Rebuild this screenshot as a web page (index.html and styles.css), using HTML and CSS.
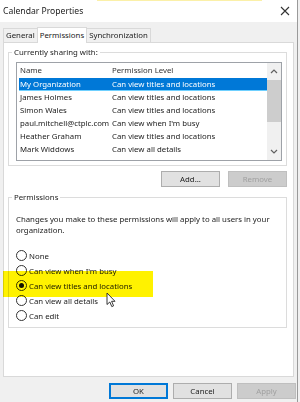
FILE: index.html
```html
<!DOCTYPE html>
<html lang="en">
<head>
  <meta charset="UTF-8">
  <title>Calendar Properties</title>
  <link rel="stylesheet" href="styles.css">
</head>
<body>
  <div class="window">
    <div class="titlebar">
      <span class="title">Calendar Properties</span>
      <svg class="close" width="10" height="10" viewBox="0 0 10 10"><path d="M1 1L9 9M9 1L1 9" stroke="#333" stroke-width="1.1"/></svg>
    </div>

    <div class="content">
      <div class="tabs">
        <div class="tab">General</div>
        <div class="tab active">Permissions</div>
        <div class="tab">Synchronization</div>
      </div>

      <div class="page">
        <fieldset class="group share">
          <legend>Currently sharing with:</legend>
          <div class="list">
            <div class="rows">
              <div class="row head"><span class="c1">Name</span><span class="c2">Permission Level</span></div>
              <div class="row selected"><span class="c1">My Organization</span><span class="c2">Can view titles and locations</span></div>
              <div class="row"><span class="c1">James Holmes</span><span class="c2">Can view titles and locations</span></div>
              <div class="row"><span class="c1">Simon Wales</span><span class="c2">Can view titles and locations</span></div>
              <div class="row"><span class="c1">paul.mitchell@ctplc.com</span><span class="c2">Can view when I'm busy</span></div>
              <div class="row"><span class="c1">Heather Graham</span><span class="c2">Can view titles and locations</span></div>
              <div class="row"><span class="c1">Mark Widdows</span><span class="c2">Can view all details</span></div>
              <div class="row"><span class="c1">Richard Bowles</span><span class="c2">Can view titles and locations</span></div>
            </div>
            <div class="scrollbar">
              <svg class="arrow" width="8" height="5" viewBox="0 0 8 5"><path d="M1 4L4 1L7 4" fill="none" stroke="#606060" stroke-width="1.2"/></svg>
              <div class="thumb"></div>
              <div class="track"></div>
              <svg class="arrow" width="8" height="5" viewBox="0 0 8 5"><path d="M1 1L4 4L7 1" fill="none" stroke="#606060" stroke-width="1.2"/></svg>
            </div>
          </div>
        </fieldset>

        <div class="list-buttons">
          <button class="btn">Add...</button>
          <button class="btn" disabled>Remove</button>
        </div>

        <fieldset class="group perms">
          <legend>Permissions</legend>
          <p class="note">Changes you make to these permissions will apply to all users in your organization.</p>
          <div class="radios">
            <div class="radio"><span class="dot"></span>None</div>
            <div class="radio"><span class="dot"></span>Can view when I'm busy</div>
            <div class="radio"><span class="dot checked"></span>Can view titles and locations</div>
            <div class="radio"><span class="dot"></span>Can view all details</div>
            <div class="radio"><span class="dot"></span>Can edit</div>
          </div>
        </fieldset>
      </div>

      <div class="dialog-buttons">
        <button class="btn default">OK</button>
        <button class="btn">Cancel</button>
        <button class="btn" disabled>Apply</button>
      </div>
    </div>
  </div>

  <!-- highlighter mark and mouse pointer from the recording -->
  <div class="highlight"></div>
  <svg class="cursor" width="10" height="16" viewBox="0 0 10 16"><path d="M1 1L1 12.5L3.8 10L5.8 14.6L7.6 13.8L5.6 9.3L9 9.3Z" fill="#fff" stroke="#222" stroke-width="0.9" stroke-linejoin="round"/></svg>
</body>
</html>
```

FILE: styles.css
```css
body {
  margin: 0;
  background: #f0f0f0;
  font-family: "Noto Sans", "Open Sans", sans-serif;
  font-size: 7.8px;
  color: #222;
  position: relative;
  width: 300px;
  height: 402px;
  overflow: hidden;
}

.window {
  width: 298px;
  height: 402px;
  border-right: 1px solid #9a9a9a;
  box-sizing: border-box;
}

.titlebar {
  height: 22px;
  background: linear-gradient(#fbf0a8, #fbf0a8) 97px 0 / 165px 1px no-repeat, #fff;
  display: flex;
  align-items: center;
  justify-content: space-between;
  padding: 0 7px 0 3px;
}
.title {
  font-size: 8.6px;
  color: #1a1a1a;
}

.content {
  padding: 0 3px;
}

.tabs {
  display: flex;
  height: 20px;
  align-items: flex-end;
}
.tab {
  height: 13px;
  line-height: 13px;
  padding: 0 2px;
  border: 1px solid #d9d9d9;
  border-bottom: none;
  margin-right: -1px;
  background: #f0f0f0;
}
.tab.active {
  height: 15px;
  line-height: 14px;
  background: #fff;
  position: relative;
  z-index: 1;
  margin-bottom: -1px;
}

.page {
  height: 335px;
  background: #fff;
  border: 1px solid #d9d9d9;
  box-sizing: border-box;
  padding: 3px 6px 0 4px;
}

.group {
  margin: 0;
  min-width: 0;
  border: 1px solid #dcdcdc;
  padding: 4px 4px 4px 7px;
}
.group legend {
  padding: 0 2px;
  margin-left: -4px;
  line-height: 12px;
}

.list {
  display: flex;
  height: 99px;
  border: 1px solid #9ea2a8;
  box-sizing: border-box;
}
.rows {
  flex: 1;
  min-width: 0;
  overflow: hidden;
  padding: 0 0 0 2px;
}
.row {
  display: flex;
  height: 13px;
  line-height: 13px;
  white-space: nowrap;
}
.row.head {
  height: 15px;
  line-height: 15px;
  color: #333;
}
.row.selected {
  background: #0078d7;
  color: #fff;
  border-bottom: 1px solid #6fd0ff;
  height: 12px;
  line-height: 12px;
}
.c1 {
  width: 92px;
  flex: none;
  padding-left: 1px;
  overflow: hidden;
}

.scrollbar {
  width: 14px;
  flex: none;
  background: #f0f0f0;
  display: flex;
  flex-direction: column;
  align-items: center;
}
.arrow {
  margin: 6px 0;
}
.thumb {
  width: 14px;
  height: 42px;
  background: #cdcdcd;
}
.track {
  flex: 1;
}

.list-buttons {
  display: flex;
  justify-content: flex-end;
  gap: 8px;
  margin: 5px 0 4px;
}

.btn {
  width: 59px;
  height: 16px;
  padding: 0;
  font-family: inherit;
  font-size: 7.8px;
  color: #222;
  background: #e1e1e1;
  border: 1px solid #adadad;
}
.btn:disabled {
  background: #cccccc;
  border-color: #bfbfbf;
  color: #a0a0a0;
}
.btn.default {
  border: 1px solid #0078d7;
  box-shadow: inset 0 0 0 1px #0078d7;
}

.perms {
  padding-top: 11px;
  padding-bottom: 4px;
}
.note {
  margin: 0 0 12px;
  line-height: 11px;
}
.radios {
  display: flex;
  flex-direction: column;
}
.radio {
  display: flex;
  align-items: center;
  height: 15px;
  gap: 2px;
}
.dot {
  width: 9px;
  height: 9px;
  border: 1px solid #333;
  border-radius: 50%;
  background: #fff;
  display: flex;
  align-items: center;
  justify-content: center;
}
.dot.checked::after {
  content: "";
  width: 5px;
  height: 5px;
  border-radius: 50%;
  background: #111;
}

.dialog-buttons {
  display: flex;
  justify-content: flex-end;
  gap: 5px;
  margin-top: 6px;
  margin-right: -2px;
}

.highlight {
  position: absolute;
  left: 3px;
  top: 271px;
  width: 150px;
  height: 26px;
  background: #fff200;
  mix-blend-mode: multiply;
}
.cursor {
  position: absolute;
  left: 106px;
  top: 292px;
}
```
